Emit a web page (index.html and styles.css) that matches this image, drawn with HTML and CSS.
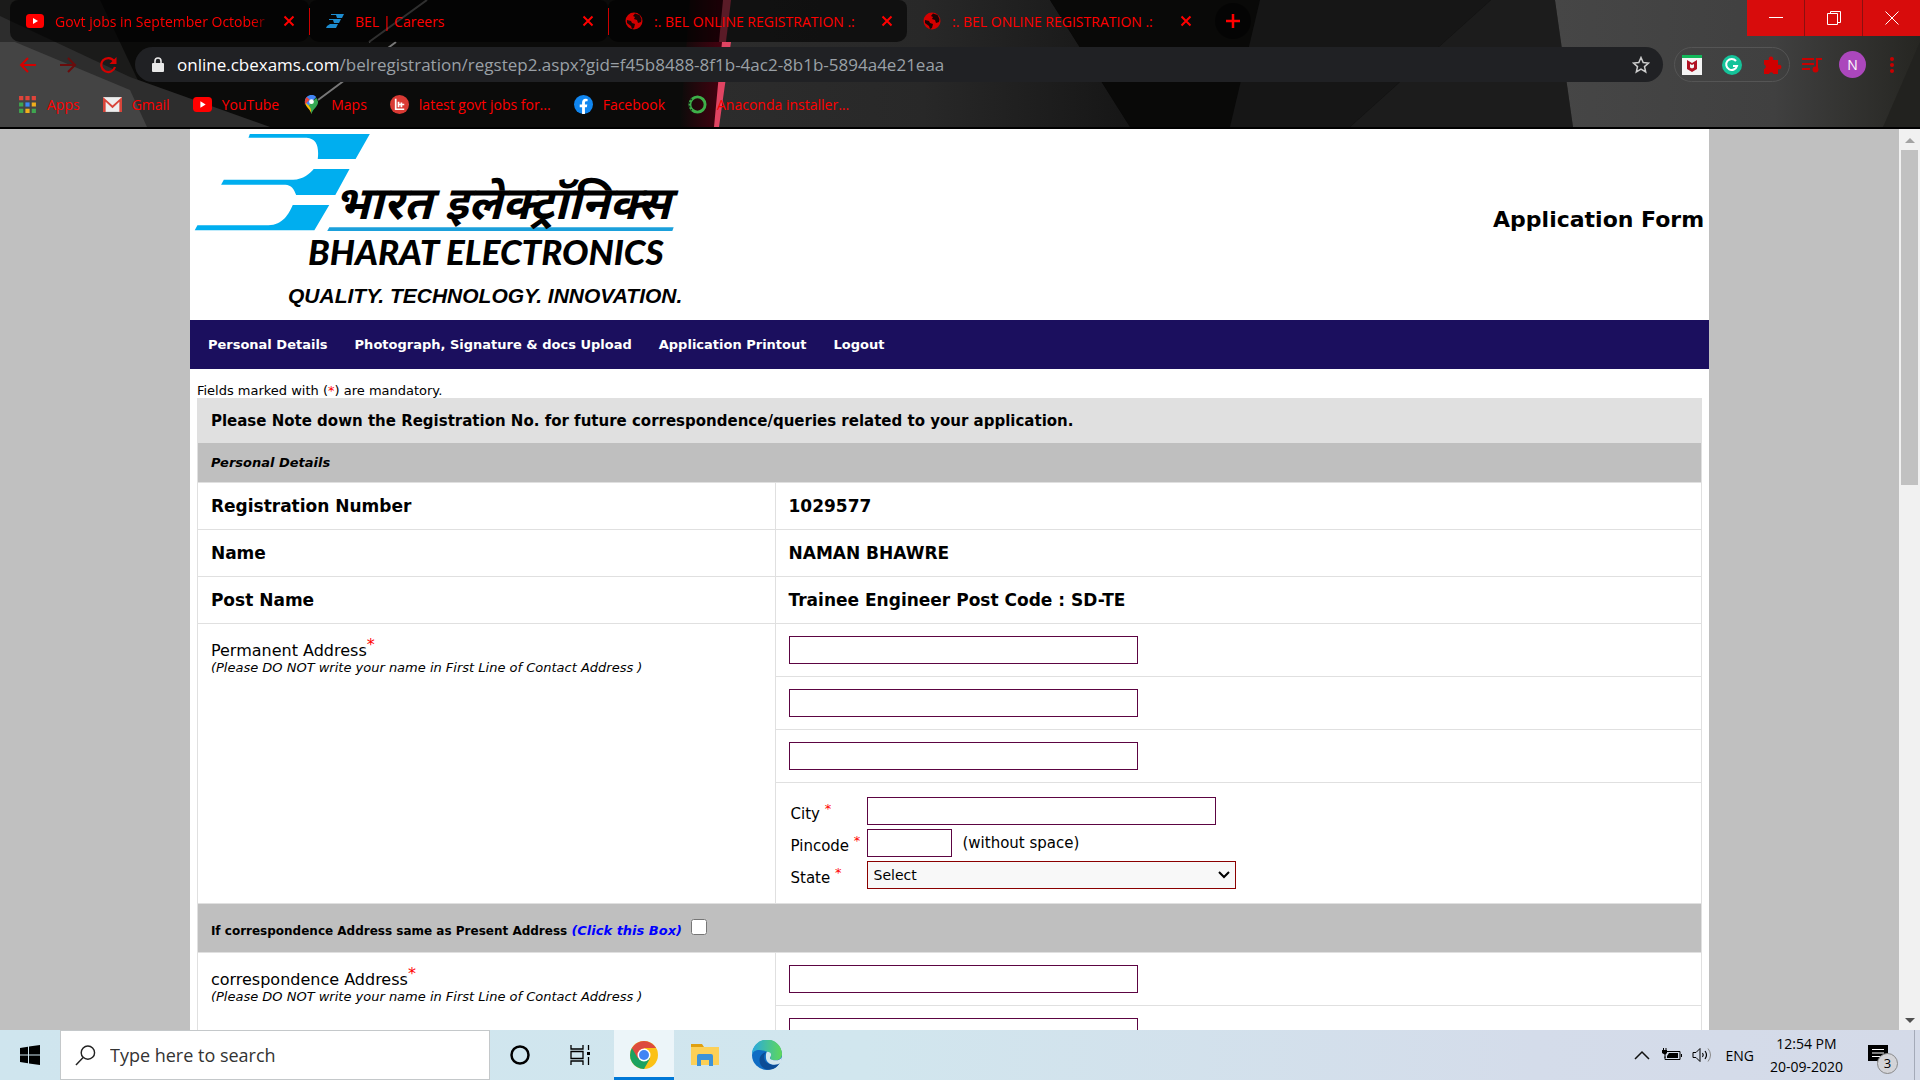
FILE: index.html
```html
<!DOCTYPE html>
<html lang="en">
<head>
<meta charset="utf-8">
<title>:. BEL ONLINE REGISTRATION .:</title>
<link rel="stylesheet" href="styles.css">
</head>
<body>
<svg class="defs" width="0" height="0" aria-hidden="true">
  <symbol id="i-close" viewBox="0 0 12 12"><path d="M1.500 1.500l9 9M10.500 1.500l-9 9" stroke="#f00" stroke-width="2" fill="none"/></symbol>
  <symbol id="i-yt" viewBox="0 0 18 14"><rect width="18" height="14" rx="3.500" fill="#f00"/><path d="M7 4l5 3-5 3z" fill="#fff"/></symbol>
  <symbol id="i-globe" viewBox="0 0 18 18"><circle cx="9" cy="9" r="8.500" fill="#d40000"/><path d="M2 8l4 1 1 2 3 1-1 4-2 1-1-3-4-3zM10 1.500L8 4l2 1-1 2 3 1 1 3 3-1 .5-3-2-4z" fill="#1b0505"/></symbol>
</svg>

<header class="browser">
  <svg class="theme" viewBox="0 0 1920 127" preserveAspectRatio="none" aria-hidden="true">
    <defs>
      <linearGradient id="g1"><stop offset="0" stop-color="#2c2c2c"/><stop offset=".5" stop-color="#282828"/><stop offset="1" stop-color="#161616"/></linearGradient>
      <linearGradient id="g2"><stop offset="0" stop-color="#464646"/><stop offset=".6" stop-color="#404040"/><stop offset="1" stop-color="#262622"/></linearGradient>
      <linearGradient id="g3"><stop offset="0" stop-color="#500010" stop-opacity="0"/><stop offset="1" stop-color="#4a0010"/></linearGradient>
    </defs>
    <rect width="1920" height="127" fill="#0b0b0a"/>
    <path d="M0 0h100l60 127H0z" fill="#1b1b1a"/>
    <path d="M0 16L130 77l140 50H0z" fill="#2d2d2d"/>
    <path d="M0 42h15l115 48 17 37H0z" fill="#444"/>
    <path d="M690 0h36l-8 127h-38z" fill="url(#g3)"/>
    <path d="M730 0h320l80 127H718z" fill="url(#g1)"/>
    <path d="M1050 0h450l-150 127h-220z" fill="#090908"/>
    <path d="M1260 0h231L1350 127h-120z" fill="#161616"/>
    <path d="M1491 0h64l18 127h-223z" fill="#1c1c1c"/>
    <path d="M1555 0h365v127h-347z" fill="url(#g2)"/>
    <path d="M1920 42v85h-37z" fill="#22221f"/>
    <path d="M427 0l-58 42M396 42l-78 58" stroke="#777" stroke-width="2"/>
    <path d="M723 0h8l-5 42h-7zM722 42h9l-12 85h-5z" fill="#e04462"/>
  </svg>
  <nav class="tabs" aria-label="Tabs">
    <div class="tab dim"><svg class="ic" viewBox="0 0 18 14"><use href="#i-yt"/></svg><span class="tt fade">Govt jobs in September October</span><button class="x" aria-label="Close"><svg><use href="#i-close"/></svg></button></div>
    <div class="tab dim sep"><svg class="ic" viewBox="0 0 18 14"><path d="M5 0h13l-2 4h-5l-1-3H5zM3 5h12l-2 4H8L7 6H3zM4 10h8l-2 4H0l1-2z" fill="#1c8cd0"/></svg><span class="tt">BEL | Careers</span><button class="x" aria-label="Close"><svg><use href="#i-close"/></svg></button></div>
    <div class="tab dim sep"><svg class="ic"><use href="#i-globe"/></svg><span class="tt">:. BEL ONLINE REGISTRATION .:</span><button class="x" aria-label="Close"><svg><use href="#i-close"/></svg></button></div>
    <div class="tab"><svg class="ic"><use href="#i-globe"/></svg><span class="tt">:. BEL ONLINE REGISTRATION .:</span><button class="x" aria-label="Close"><svg><use href="#i-close"/></svg></button></div>
    <button class="newtab" aria-label="New tab"><svg viewBox="0 0 16 16"><path d="M8 1v14M1 8h14" stroke="#f00" stroke-width="2.500"/></svg></button>
    <div class="wincontrols">
      <button aria-label="Minimize"><svg viewBox="0 0 14 14"><path d="M0 6.500h14" stroke="#fff"/></svg></button>
      <button aria-label="Restore"><svg viewBox="0 0 14 14"><path d="M.5 2.500h10v11H.5zM3.500 2.500v-2h10v11h-3" stroke="#fff" fill="none"/></svg></button>
      <button aria-label="Close window"><svg viewBox="0 0 14 14"><path d="M.5 .5l13 13M13.500 .5l-13 13" stroke="#fff"/></svg></button>
    </div>
  </nav>
  <div class="toolbar">
    <button class="tb" aria-label="Back"><svg viewBox="0 0 18 18"><path d="M17 9H2M9 2L2 9l7 7" stroke="#d40000" stroke-width="2" fill="none"/></svg></button>
    <button class="tb" aria-label="Forward"><svg viewBox="0 0 18 18"><path d="M1 9h15M9 2l7 7-7 7" stroke="#6a0c0c" stroke-width="2" fill="none"/></svg></button>
    <button class="tb" aria-label="Reload"><svg viewBox="0 0 18 18"><path d="M15 5a7 7 0 1 0 1 6" stroke="#d40000" stroke-width="2.200" fill="none"/><path d="M17.500 1v7h-7z" fill="#d40000"/></svg></button>
    <div class="omnibox">
      <svg class="lock" viewBox="0 0 12 16"><rect y="6" width="12" height="9" rx="1" fill="#e8e8e8"/><path d="M3 7V4a3 3 0 0 1 6 0v3" stroke="#e8e8e8" stroke-width="1.600" fill="none"/></svg>
      <span class="url"><b>online.cbexams.com</b>/belregistration/regstep2.aspx?gid=f45b8488-8f1b-4ac2-8b1b-5894a4e21eaa</span>
      <button class="plain" aria-label="Bookmark"><svg class="star" viewBox="0 0 18 18"><path d="M9 1.500l2.200 5 5.300.5-4 3.600 1.200 5.400L9 13.200 4.300 16l1.200-5.400-4-3.600 5.300-.5z" stroke="#ccc" stroke-width="1.500" fill="none"/></svg></button>
    </div>
    <div class="exts">
      <svg viewBox="0 0 20 20"><path d="M0 0h20v20H0z" fill="#f4f4f4"/><path d="M0 0h20v3H0z" fill="#12b85a"/><path d="M5 5l5 3 5-3v9l-5 3-5-3z" fill="#b01022"/><path d="M8 9l2 1 2-1v3.500l-2 1-2-1z" fill="#f4f4f4"/></svg>
      <svg viewBox="0 0 20 20"><circle cx="10" cy="10" r="10" fill="#15c39a"/><path d="M14 6a5.500 5.500 0 1 0 1 5h-4" stroke="#fff" stroke-width="2" fill="none"/></svg>
      <svg viewBox="0 0 20 20"><path d="M2 5h5a2.300 2.300 0 1 1 4 0h5v5a2.300 2.300 0 1 1 0 4v5h-4.500a2.300 2.300 0 0 0-4.500 0H2v-5a2.300 2.300 0 0 0 0-4.500z" fill="#d00000"/></svg>
    </div>
    <svg class="music" viewBox="0 0 20 16"><path d="M0 2h12M0 7h12M0 12h8" stroke="#c80000" stroke-width="2"/><path d="M20 2h-5v9" stroke="#c80000" stroke-width="2" fill="none"/><circle cx="13.500" cy="12.500" r="3" fill="#c80000"/></svg>
    <span class="avatar">N</span>
    <button class="plain" aria-label="Menu"><svg class="dots" viewBox="0 0 4 18"><circle cx="2" cy="3" r="2"/><circle cx="2" cy="9" r="2"/><circle cx="2" cy="15" r="2"/></svg></button>
  </div>
  <nav class="bookmarks" aria-label="Bookmarks">
    <a href="#"><svg viewBox="0 0 18 18"><path d="M1 1h4v4H1zM7 1h4v4H7zM13 1h4v4h-4z" fill="#e0443a"/><path d="M1 7h4v4H1zM13 13h4v4h-4z" fill="#3fa650"/><path d="M7 7h4v4H7z" fill="#3c86f4"/><path d="M13 7h4v4h-4zM7 13h4v4H7z" fill="#f0ae1c"/><path d="M1 13h4v4H1z" fill="#3fa650"/></svg>Apps</a>
    <a href="#"><svg viewBox="0 0 18 18"><path d="M0 2h18v14H0z" fill="#eee"/><path d="M0 16V2l9 8 9-8v14h-2.500V6.500L9 12.500l-6.500-6V16z" fill="#d8453a"/></svg>Gmail</a>
    <a href="#"><svg viewBox="0 0 18 14"><use href="#i-yt"/></svg>YouTube</a>
    <a href="#"><svg viewBox="0 0 18 20"><path d="M9 20C8 15 2 12 2 7l7-1z" fill="#fbbc04"/><path d="M9 20c1-5 7-8 7-13l-2-4-8 8 2 3z" fill="#34a853"/><path d="M2 7a7 7 0 0 1 12-5L6 11z" fill="#4285f4"/><path d="M2 7a7 7 0 0 1 2-5l3 3-5 5z" fill="#ea4335"/><circle cx="9" cy="7" r="2.500" fill="#fff"/></svg>Maps</a>
    <a href="#"><svg viewBox="0 0 20 20"><circle cx="10" cy="10" r="10" fill="#d93a34"/><path d="M6 4v11h9M9 7v6M12 8v5M9 10h6" stroke="#fff" stroke-width="1.800" fill="none"/></svg>latest govt jobs for...</a>
    <a href="#"><svg viewBox="0 0 20 20"><circle cx="10" cy="10" r="10" fill="#1086f0"/><path d="M8.500 20v-7H6v-3h2.500V8c0-2.600 1.500-4 3.800-4l2 .2v2.500h-1.200c-1.200 0-1.600.7-1.600 1.500V10H14l-.5 3h-2v7z" fill="#fff"/></svg>Facebook</a>
    <a href="#"><svg viewBox="0 0 20 20"><circle cx="10" cy="10" r="8" stroke="#3eb049" stroke-width="3" fill="none"/><path d="M4 4a8 8 0 0 0 0 12" stroke="#14301a" stroke-width="1.500" stroke-dasharray="2 2" fill="none"/></svg>Anaconda installer...</a>
  </nav>
</header>

<div class="view">
  <main class="page">
    <div class="sheet">
      <header class="masthead">
        <svg class="logo" viewBox="0 0 517 191" role="img" aria-label="Bharat Electronics">
          <g transform="scale(.338 .3333) translate(-30 -12)" fill="#00aeef">
            <path d="M207 27H562L520 102H408C412 65 405 40 375 38H203z"/>
            <path d="M396 132H502L460 210H344C338 192 330 180 312 179H122L130 164H335C365 164 385 145 396 132z"/>
            <path d="M334 240H442L398 316H44L52 301H262C305 299 322 268 334 240z"/>
            <path d="M442 307H1461L1457 318H436z" fill="#1ba0db"/>
          </g>
          <text class="l-hi" x="144" y="90">भारत इलेक्ट्रॉनिक्स</text>
          <text class="l-en" x="118" y="136">BHARAT ELECTRONICS</text>
          <text class="l-tag" x="98" y="174">QUALITY. TECHNOLOGY. INNOVATION.</text>
        </svg>
        <h1>Application Form</h1>
      </header>
      <nav class="menu">
        <a href="#">Personal Details</a><a href="#">Photograph, Signature &amp; docs Upload</a><a href="#">Application Printout</a><a href="#">Logout</a>
      </nav>
      <form class="content">
        <p class="mandatory">Fields marked with (<i class="req">*</i>) are mandatory.</p>
        <table class="form">
          <colgroup><col class="c1"><col></colgroup>
          <tbody>
          <tr class="note"><th colspan="2">Please Note down the Registration No. for future correspondence/queries related to your application.</th></tr>
          <tr class="section"><th colspan="2"><em>Personal Details</em></th></tr>
          <tr class="data"><th>Registration Number</th><td>1029577</td></tr>
          <tr class="data"><th>Name</th><td>NAMAN BHAWRE</td></tr>
          <tr class="data"><th>Post Name</th><td>Trainee Engineer Post Code : SD-TE</td></tr>
          <tr class="line"><td class="addr" rowspan="4"><label for="p1">Permanent Address<sup>*</sup></label><em>(Please DO NOT write your name in First Line of Contact Address )</em></td><td><input class="wide" id="p1" type="text"></td></tr>
          <tr class="line"><td><input class="wide" type="text" aria-label="Permanent address line 2"></td></tr>
          <tr class="line"><td><input class="wide" type="text" aria-label="Permanent address line 3"></td></tr>
          <tr><td class="place">
            <div class="fields">
              <label for="city">City <sup>*</sup></label><span><input class="wide" id="city" type="text"></span>
              <label for="pin">Pincode <sup>*</sup></label><span><input class="pin" id="pin" type="text">(without space)</span>
              <label for="state">State <sup>*</sup></label><span class="pick"><select id="state"><option>Select</option></select><svg viewBox="0 0 12 8"><path d="M1 1l5 5 5-5" stroke="#000" stroke-width="2" fill="none"/></svg></span>
            </div>
          </td></tr>
          <tr class="same"><th colspan="2"><label for="same">If correspondence Address same as Present Address <em>(Click this Box)</em></label><input id="same" type="checkbox"></th></tr>
          <tr class="line"><td class="addr" rowspan="3"><label for="c1">correspondence Address<sup>*</sup></label><em>(Please DO NOT write your name in First Line of Contact Address )</em></td><td><input class="wide" id="c1" type="text"></td></tr>
          <tr class="line"><td><input class="wide" type="text" aria-label="Correspondence address line 2"></td></tr>
          <tr class="line"><td><input class="wide" type="text" aria-label="Correspondence address line 3"></td></tr>
          </tbody>
        </table>
      </form>
    </div>
  </main>
  <div class="scroll" aria-hidden="true"><i class="up"></i><i class="thumb"></i><i class="down"></i></div>
</div>

<footer class="taskbar">
  <button class="start" aria-label="Start"><svg viewBox="0 0 20 20"><path d="M0 3l8-1.200V9.500H0zM9 1.600L20 0v9.500H9zM0 10.500h8v7.700L0 17zM9 10.500h11V20L9 18.400z"/></svg></button>
  <label class="search"><svg viewBox="0 0 22 22"><circle cx="13.500" cy="8" r="7" stroke="#222" stroke-width="1.500" fill="none"/><path d="M8.500 13L1 21" stroke="#222" stroke-width="1.500"/></svg><input type="text" placeholder="Type here to search" aria-label="Search"></label>
  <button class="app" aria-label="Cortana"><svg viewBox="0 0 20 20"><circle cx="10" cy="10" r="8.500" stroke="#000" stroke-width="2.500" fill="none"/></svg></button>
  <button class="app" aria-label="Task View"><svg viewBox="0 0 20 20"><path d="M1 0v4h12V0M1 20v-4h12v4M1 6.500h12v7H1zM18.500 0v5M18.500 12v8" stroke="#000" stroke-width="1.300" fill="none"/><path d="M17 7h3v3h-3z"/></svg></button>
  <button class="app active" aria-label="Chrome"><svg class="big" viewBox="0 0 28 28"><circle cx="14" cy="14" r="14" fill="#fbc116"/><path d="M14 14L1.900 7A14 14 0 0 0 14 28l6-10.500z" fill="#1aa260"/><path d="M1.900 7a14 14 0 0 1 24.200 0H14v7l-6 3.500z" fill="#dd4b3e"/><circle cx="14" cy="14" r="6.500" fill="#fff"/><circle cx="14" cy="14" r="5" fill="#4285f4"/></svg></button>
  <button class="app" aria-label="File Explorer"><svg class="big" viewBox="0 0 28 28"><path d="M0 3h11l2 3H0z" fill="#e0a010"/><path d="M0 6h28v18H0z" fill="#fcd057"/><path d="M6 15a2 2 0 0 1 2-2h12a2 2 0 0 1 2 2v10h-4v-6h-8v6H6z" fill="#3c92d8"/></svg></button>
  <button class="app" aria-label="Edge"><svg class="edge" viewBox="0 0 28 28"><defs><linearGradient id="e1"><stop offset="0" stop-color="#2aa8e0"/><stop offset="1" stop-color="#5fd85a"/></linearGradient></defs><circle cx="14" cy="14" r="14" fill="#0f6cc4"/><path d="M0 14a14 14 0 0 1 28-1c0 4-3 6-6 6-4 0-5-1-5-3 1-1 1-5-3-5C7 8 1 9 0 14z" fill="url(#e1)"/><path d="M14 11c-5 3-3 12 5 12 3 0 5-1 7-2-3 6-9 8-14 6-7-4-7-14 2-16z" fill="#0c4c96"/><path d="M14 11c5 0 4 4 3 5s1 3 5 3c3 0 4-1 6-3l-1 5c-5 4-14 2-14-5 0-2 0-4 1-5z" fill="#d4e6ee"/></svg></button>
  <div class="tray">
    <svg class="t-chev" viewBox="0 0 16 10"><path d="M1 9l7-7 7 7" stroke="#111" stroke-width="1.500" fill="none"/></svg>
    <svg class="t-bat" viewBox="0 0 20 14"><path d="M5 3.500h13v8H3v-3M19.500 6v3" stroke="#000" fill="none"/><path d="M7 5h9v5H5V8z"/><path d="M0 2h5v3L3.500 6.500V10h-1V6.500L0 5zM1 0h1v2H1zM3.500 0h1v2h-1z"/></svg>
    <svg class="t-vol" viewBox="0 0 20 16"><path d="M1 5.500h3L8 1.500v13l-4-4H1z" stroke="#000" fill="none"/><path d="M10.500 6q1.500 2 0 4M13 4q3 4 0 8" stroke="#000" fill="none" stroke-width="1.200"/><path d="M16 1.500q5 6.500 0 13" stroke="#888" fill="none"/></svg>
    <span class="lang">ENG</span>
    <span class="clock"><time>12:54 PM</time><time>20-09-2020</time></span>
    <span class="notif"><svg viewBox="0 0 20 20"><path d="M0 0h20v16h-7v4l-4-4H0z"/><path d="M4 4.500h12M4 8h12M4 11.500h9" stroke="#fff"/></svg><b>3</b></span>
    <i class="peek"></i>
  </div>
</footer>
</body>
</html>
```
FILE: styles.css
```css
* { box-sizing: border-box; }
body {
  margin: 0;
  height: 100vh;
  display: flex;
  flex-direction: column;
  overflow: hidden;
  font-family: Verdana, "DejaVu Sans", sans-serif;
  color: #000;
}
button { border: 0; padding: 0; background: none; display: flex; align-items: center; justify-content: center; }
svg { display: block; flex: none; }
.defs { position: absolute; }

/* browser window */
.browser {
  position: relative;
  isolation: isolate;
  flex: none;
  border-bottom: 2px solid #000;
  font-family: "Segoe UI", "Open Sans", sans-serif;
  color: #f00;
}
.theme { position: absolute; inset: 0; width: 100%; height: 100%; z-index: -1; }
.tabs { display: flex; height: 42px; padding-left: 10px; }
.tab {
  display: flex;
  align-items: center;
  width: 299px;
  padding: 0 14px 0 16px;
  font-size: 14px;
}
.dim { background: rgba(0, 0, 0, .6); border-radius: 8px 8px 10px 10px; }
.sep { border-left: 1px solid #c00; border-image: linear-gradient(transparent 9px, #c00 9px, #c00 34px, transparent 34px) 1; }
.ic { width: 18px; height: 18px; margin-right: 11px; }
.tt { flex: 1; white-space: nowrap; }
.fade { -webkit-mask-image: linear-gradient(90deg, #000 90%, transparent); mask-image: linear-gradient(90deg, #000 90%, transparent); }
.x { margin-left: 10px; }
.x svg { width: 12px; height: 12px; }
.newtab { width: 36px; height: 36px; margin: 3px 0 0 9px; border-radius: 50%; background: rgba(0, 0, 0, .5); }
.newtab svg { width: 16px; height: 16px; }
.wincontrols { display: flex; gap: 1px; margin-left: auto; height: 36px; background: #8a1010; }
.wincontrols button { width: 57px; background: #d80c0c; }
.wincontrols svg { width: 14px; height: 14px; }

.toolbar { display: flex; align-items: center; height: 45px; padding: 0 26px 0 19px; }
.tb { width: 18px; margin-right: 22px; }
.tb svg { width: 18px; height: 18px; }
.omnibox {
  flex: 1;
  display: flex;
  align-items: center;
  height: 35px;
  margin-left: -4px;
  padding: 0 13px 0 17px;
  border-radius: 18px;
  background: #202124;
  font-size: 17px;
}
.lock { width: 12px; height: 16px; margin-right: 13px; }
.url { flex: 1; color: #9aa0a6; white-space: nowrap; overflow: hidden; }
.url b { font-weight: 400; color: #fff; }
.star { width: 18px; height: 18px; }
.exts { display: flex; align-items: center; gap: 20px; height: 35px; margin: 0 12px 0 11px; padding: 0 7px; border: 1px solid #555; border-radius: 18px; }
.exts svg { width: 20px; height: 20px; }
.music { width: 20px; height: 16px; margin-right: 17px; }
.avatar { width: 27px; height: 27px; margin-right: 24px; border-radius: 50%; background: #ab47bc; color: #fff; font-size: 14px; line-height: 27px; text-align: center; }
.dots { width: 4px; height: 18px; fill: #c80000; }

.bookmarks { display: flex; align-items: center; gap: 23px; height: 40px; padding: 0 20px 5px 18px; font-size: 14px; }
.bookmarks a { display: flex; align-items: center; gap: 10px; color: #f00; text-decoration: none; white-space: nowrap; }
.bookmarks svg { width: 19px; height: 19px; }

/* site */
.view { flex: 1; min-height: 0; display: flex; }
.page { flex: 1; min-width: 0; overflow: hidden; background: #c0c0c0; }
.sheet { width: 80%; margin: 0 auto; background: #fff; }
.masthead { display: flex; align-items: center; justify-content: space-between; padding-right: 5px; }
.logo { width: 517px; height: 191px; }
.logo text { font-weight: 700; font-style: italic; fill: #000; }
.l-hi { font-family: "Noto Sans Devanagari", "Noto Sans", sans-serif; font-size: 46px; }
.logo .l-en { font-family: "Liberation Sans Narrow", "Lato", sans-serif; font-size: 35px; font-weight: 900; }
.l-tag { font-family: "Liberation Sans", Arial, sans-serif; font-size: 21px; }
h1 { margin: 0; padding-bottom: 10px; font-size: 22px; }
.menu { display: flex; align-items: center; gap: 27px; height: 49px; padding-left: 18px; background: #1b0f5e; }
.menu a { color: #fff; font-size: 13px; font-weight: 700; text-decoration: none; }
.content { padding: 14px 7px 0; }
.mandatory { margin: 0; font-size: 13px; line-height: 15px; }
.req { color: #f00; font-style: normal; }
.form { width: 100%; border-collapse: collapse; table-layout: fixed; font-size: 16px; line-height: 20px; }
.c1 { width: 38.4%; }
.form th, .form td { border: 1px solid #e0e0e0; padding: 0 13px; text-align: left; font-weight: 700; }
.note th { height: 44px; background: #e0e0e0; font-size: 15px; }
.section th { height: 40px; background: #bfbfbf; font-size: 13px; }
.data th, .data td { height: 47px; font-size: 17px; }
.line { height: 53px; }
.form .addr { padding-top: 17px; vertical-align: top; font-weight: 400; }
.addr label, .addr em { display: block; }
.addr em { font-size: 13px; line-height: 14px; }
sup { color: #f00; line-height: 0; font-size: 16px; }
input, select { font-family: inherit; font-size: 14px; }
.wide, .pin { display: block; width: 349px; height: 28px; border: 1px solid #5c0442; background: #fff; }
.pin { width: 85px; margin-right: 11px; }
.form .place { padding: 14px 15px 14px; font-weight: 400; }
.fields { display: grid; grid-template-columns: 76px 1fr; row-gap: 4px; font-size: 15px; }
.fields label { padding-top: 6px; white-space: nowrap; line-height: 22px; }
.fields sup { font-size: 13px; }
.fields span { display: flex; align-items: center; }
.pick svg { width: 12px; height: 8px; margin-left: -18px; pointer-events: none; }
select { appearance: none; width: 369px; height: 28px; padding: 0 6px; border: 1px solid #8b0000; border-radius: 0; background: #f8f8f8; color: #000; }
.same th { height: 49px; padding-top: 4px; background: #bfbfbf; font-size: 13px; }
.same label { font-size: 12px; }
.same em { color: #00f; font-size: 13px; }
.same input { width: 16px; height: 16px; margin: 0 0 0 9px; vertical-align: 0; }

.scroll { display: flex; flex-direction: column; align-items: center; width: 21px; padding: 9px 0 7px; background: #f1f1f1; }
.up { border: 5px solid transparent; border-top: 0; border-bottom-color: #a3a3a3; }
.thumb { width: 17px; height: 335px; margin-top: 7px; background: #c1c1c1; }
.down { margin-top: auto; border: 5px solid transparent; border-bottom: 0; border-top-color: #505050; }

/* taskbar */
.taskbar { display: flex; flex: none; height: 50px; background: linear-gradient(90deg, #cfe5ee, #d1e6ee 45%, #d4dcea 80%, #d4dae8); font-family: "Segoe UI", "Open Sans", sans-serif; }
.start { width: 60px; }
.start svg { width: 20px; height: 20px; }
.search { display: flex; align-items: center; gap: 12px; width: 430px; padding-left: 14px; border: 1px solid #c4c8ca; background: #fff; }
.search svg { width: 21px; height: 21px; }
.search input { flex: 1; border: 0; font-size: 18px; }
.search input::placeholder { color: #333; }
.app { width: 60px; }
.app svg { width: 20px; height: 20px; }
.app .big { width: 28px; height: 28px; }
.app .edge { width: 30px; height: 30px; }
.active { margin-left: 4px; background: #ecf5f9; border-bottom: 3px solid #0078d7; padding-top: 3px; }
.active ~ .app { width: 62px; }
.tray { display: flex; align-items: center; margin-left: auto; font-size: 15px; }
.t-chev { width: 16px; height: 10px; margin-right: 12px; }
.t-bat { width: 20px; height: 14px; margin-right: 10px; }
.t-vol { width: 20px; height: 16px; margin-right: 13px; }
.lang { font-size: 14px; margin-right: 16px; }
.clock { display: flex; flex-direction: column; text-align: center; font-size: 14px; line-height: 23px; }
.notif { position: relative; margin: 0 26px 0 25px; }
.notif svg { width: 20px; height: 20px; }
.notif b { position: absolute; left: 9px; top: 8px; width: 21px; height: 21px; border: 1px solid #888; border-radius: 50%; background: #d4d4d8; font-size: 13px; font-weight: 400; line-height: 19px; text-align: center; }
.peek { width: 6px; height: 50px; border-left: 1px solid #a4aab8; }
```
